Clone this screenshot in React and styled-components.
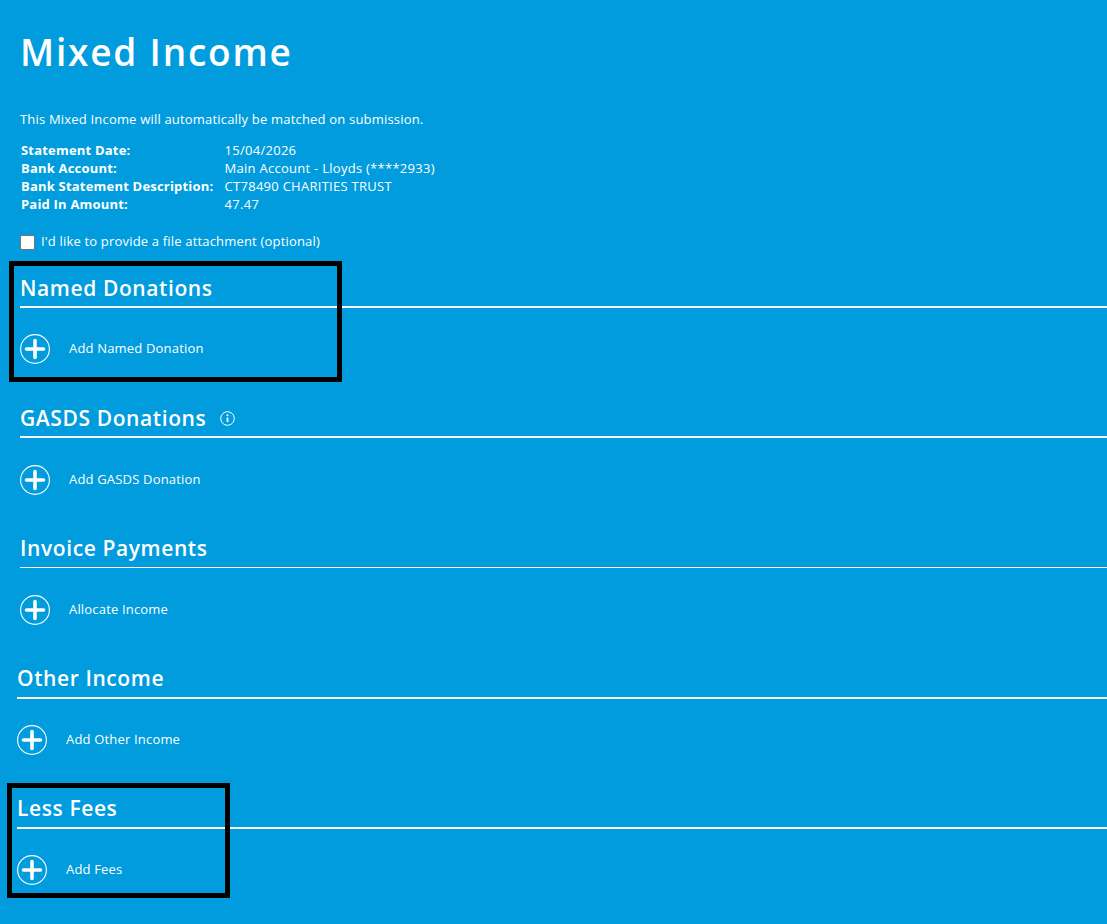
import React from 'react';
import styled, { createGlobalStyle } from 'styled-components';

const GlobalStyle = createGlobalStyle`
  html, body {
    margin: 0;
    padding: 0;
    background: #009cde;
  }
  body {
    font-family: "Open Sans", "Noto Sans", "Liberation Sans", sans-serif;
    color: #fff;
    overflow: hidden;
  }
`;

const Page = styled.div`
  position: relative;
  width: 1107px;
  height: 924px;
  padding: 28px 0 0 20px;
  box-sizing: border-box;
  overflow: hidden;
  background: #009cde;
`;

const Title = styled.h1`
  margin: 0;
  font-size: 37px;
  line-height: 48px;
  font-weight: 600;
  letter-spacing: 1.8px;
`;

const Intro = styled.p`
  margin: 33px 0 0;
  font-size: 13px;
  line-height: 20px;
  letter-spacing: 0.19px;
`;

const Details = styled.div`
  display: grid;
  grid-template-columns: 203.6px auto;
  justify-content: start;
  margin: 12px 0 0 1px;
  font-size: 13px;
  line-height: 18px;
  letter-spacing: 0.27px;
`;

const Label = styled.span`
  font-weight: 700;
  letter-spacing: 0.2px;
`;

const Attachment = styled.label`
  display: flex;
  align-items: center;
  gap: 6px;
  margin-top: 18px;
  height: 20px;
  font-size: 13px;
  letter-spacing: 0.18px;
`;

const Check = styled.input`
  width: 15px;
  height: 15px;
  margin: 2px 0 0;
  appearance: none;
  box-sizing: border-box;
  background: #fff;
  border: 1px solid #767676;
  border-radius: 2px;
`;

const Sections = styled.div`
  margin-top: 19.2px;
`;

const Section = styled.section`
  display: flex;
  flex-direction: column;
  height: 130.2px;
  margin-left: ${p => p.$shift || 0}px;
`;

const Heading = styled.h2`
  display: flex;
  flex: none;
  align-items: center;
  gap: 14px;
  margin: 0 0 ${p => p.$thin ? 1 : 0}px;
  height: 35px;
  padding: 0.4px 0 0.6px;
  width: 1100px;
  font-size: 21px;
  line-height: 35px;
  font-weight: 600;
  letter-spacing: 0.6px;
  border-bottom: ${p => p.$thin ? 1 : 2}px solid #fff;
`;

const AddRow = styled.div`
  display: flex;
  flex: none;
  align-items: center;
  gap: 19px;
  margin-top: 26.2px;
  height: 30px;
  font-size: 13px;
  letter-spacing: 0.18px;
`;

const ActionText = styled.span`
  padding-bottom: 2px;
`;

const Annotation = styled.div`
  position: absolute;
  box-sizing: border-box;
  border: 5px solid #000;
  left: ${p => p.$left}px;
  top: ${p => p.$top}px;
  width: ${p => p.$width}px;
  height: ${p => p.$height}px;
`;

const PlusIcon = () => (
  <svg width="30" height="30" viewBox="0 0 30 30" fill="none" stroke="#fff" aria-hidden="true">
    <circle cx="15" cy="15" r="14.4" strokeWidth="1.1" />
    <path d="M15 6.5v17M6.5 15h17" strokeWidth="3.6" strokeLinecap="round" />
  </svg>
);

const InfoIcon = () => (
  <svg width="15" height="15" viewBox="0 0 15 15" fill="none" stroke="#fff" aria-hidden="true">
    <circle cx="7.5" cy="7.5" r="6.8" strokeWidth="1" />
    <path d="M7.5 6.5v4.5" strokeWidth="1.8" />
    <circle cx="7.5" cy="4.2" r="1" fill="#fff" stroke="none" />
  </svg>
);

const sections = [
  { title: 'Named Donations', action: 'Add Named Donation' },
  { title: 'GASDS Donations', action: 'Add GASDS Donation', info: true },
  { title: 'Invoice Payments', action: 'Allocate Income', thin: true },
  { title: 'Other Income', action: 'Add Other Income', shift: -3 },
  { title: 'Less Fees', action: 'Add Fees', shift: -3 },
];

const details = [
  ['Statement Date:', '15/04/2026'],
  ['Bank Account:', 'Main Account - Lloyds (****2933)'],
  ['Bank Statement Description:', 'CT78490 CHARITIES TRUST'],
  ['Paid In Amount:', '47.47'],
];

export default function App() {
  return (
    <Page>
      <GlobalStyle />
      <Title>Mixed Income</Title>
      <Intro>This Mixed Income will automatically be matched on submission.</Intro>
      <Details>
        {details.map(([label, value]) => (
          <React.Fragment key={label}>
            <Label>{label}</Label>
            <span>{value}</span>
          </React.Fragment>
        ))}
      </Details>
      <Attachment>
        <Check type="checkbox" />
        I'd like to provide a file attachment (optional)
      </Attachment>
      <Sections>
        {sections.map(s => (
          <Section key={s.title} $shift={s.shift}>
            <Heading $thin={s.thin}>
              <span>{s.title}</span>
              {s.info && <InfoIcon />}
            </Heading>
            <AddRow>
              <PlusIcon />
              <ActionText>{s.action}</ActionText>
            </AddRow>
          </Section>
        ))}
      </Sections>
      <Annotation $left={9} $top={261} $width={333} $height={121} />
      <Annotation $left={7} $top={783} $width={223} $height={115} />
    </Page>
  );
}
